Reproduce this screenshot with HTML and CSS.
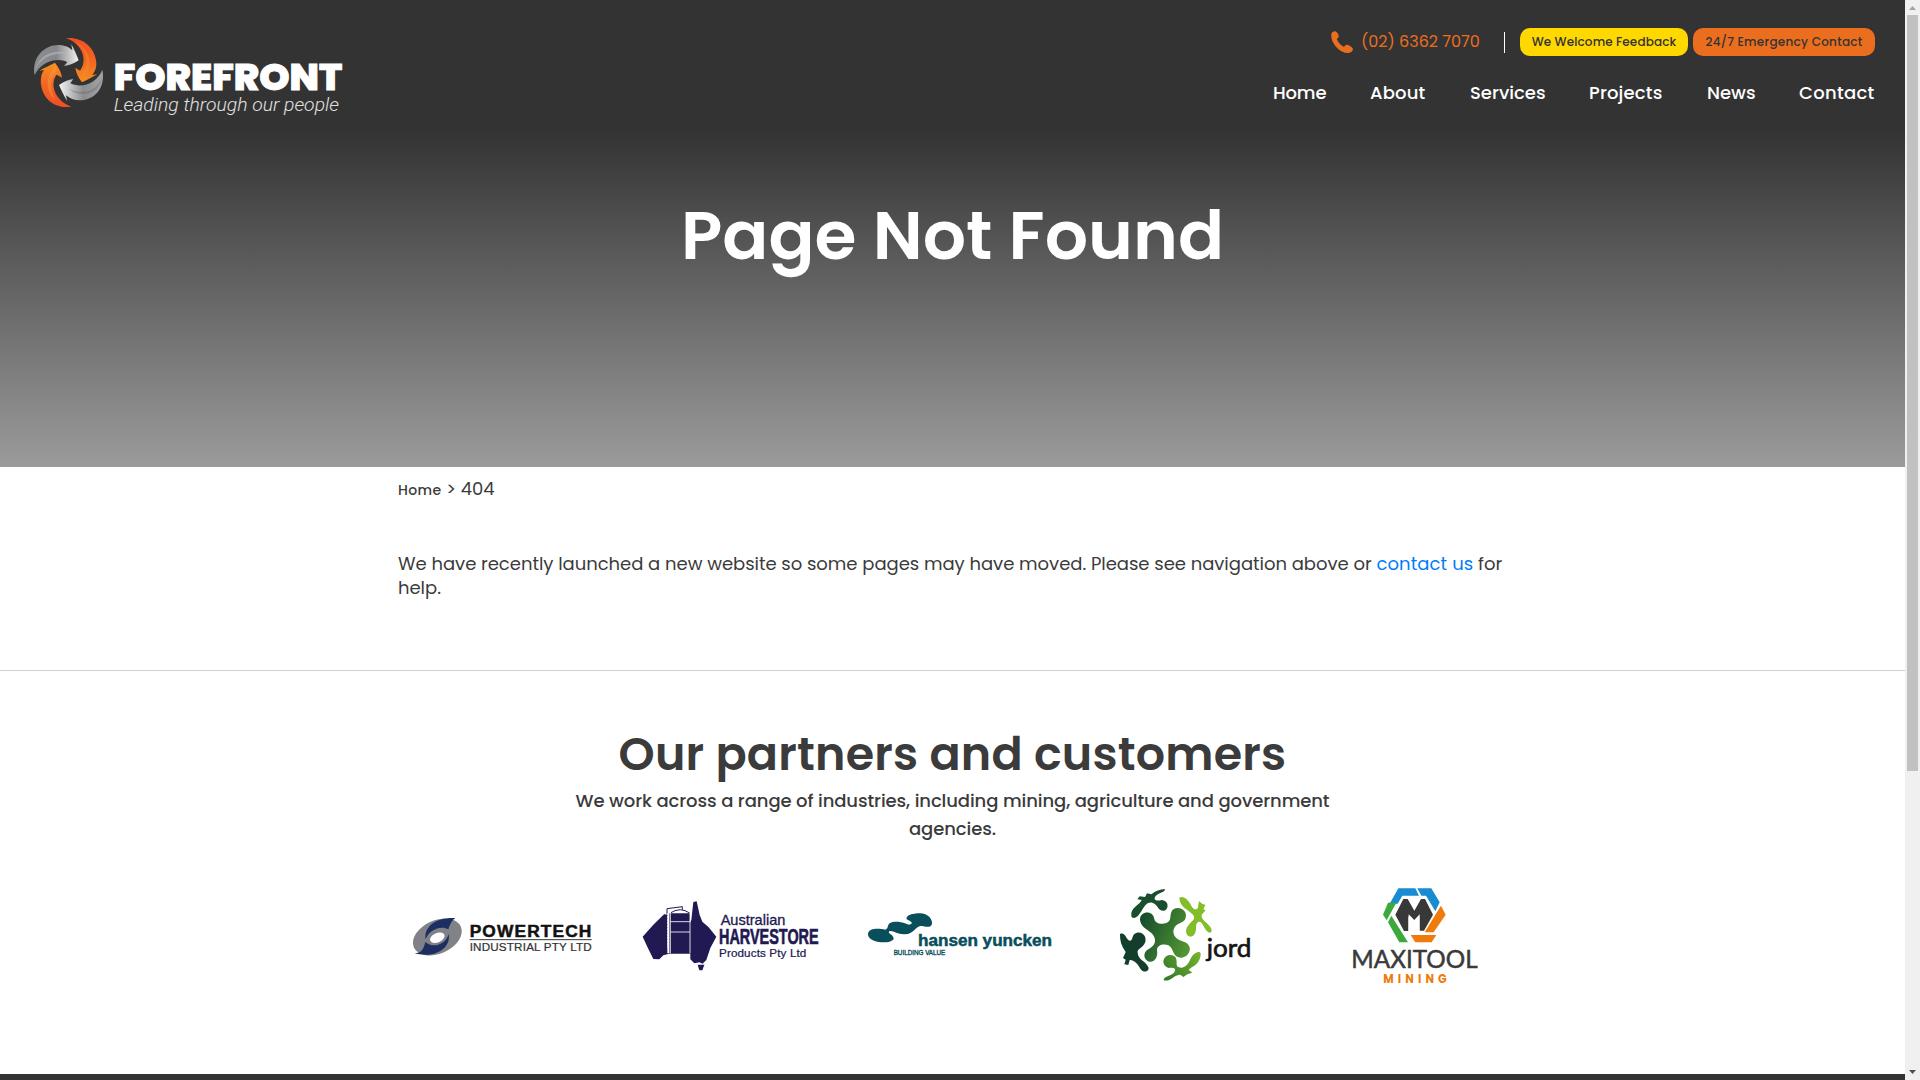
FILE: index.html
```html
<!DOCTYPE html>
<html lang="en">
<head>
<meta charset="utf-8">
<title>Page Not Found - Forefront</title>
<link rel="stylesheet" href="styles.css">
</head>
<body>
<div class="window">
<div class="page">
  <header class="hero">
    <div class="topbar">
      <a class="brand" aria-label="Forefront">
        <svg width="340" height="110" viewBox="0 0 1020 330">
          <defs>
            <linearGradient id="silver" x1="0" x2="1" y1="0" y2="0"><stop offset="0" stop-color="#8b8d90"/><stop offset=".5" stop-color="#85878a"/><stop offset="1" stop-color="#f1f1f1"/></linearGradient>
            <linearGradient id="silver2" x1="0" x2="1" y1="0" y2="0"><stop offset="0" stop-color="#f4f4f4"/><stop offset=".55" stop-color="#8b8d90"/><stop offset="1" stop-color="#a0a2a5"/></linearGradient>
            <linearGradient id="flame" x1="0" x2="0" y1="0" y2="1"><stop offset="0" stop-color="#f04e23"/><stop offset=".5" stop-color="#f36523"/><stop offset="1" stop-color="#f7901e"/></linearGradient>
            <linearGradient id="flame2" x1="0" x2="0" y1="0" y2="1"><stop offset="0" stop-color="#f7901e"/><stop offset=".5" stop-color="#f36523"/><stop offset="1" stop-color="#f04e23"/></linearGradient>
          </defs>
          <path fill="url(#silver)" d="M44 165C34 112 74 74 116 75c18 0 32 7 41 16l-3-19c9 18 16 32 22 49-12 9-28 16-44 17l10-12c-25-14-77-6-98 39z"/>
          <path fill="#bfc1c3" opacity=".5" d="M45 150C58 102 105 84 148 102c-38-6-84 6-103 48z"/>
          <path fill="url(#flame)" d="M138 54c48-4 83 25 90 66 4 22-4 37-12 45l16-2c-17 9-30 17-46 24-10-13-18-28-20-44l14 9c20-23 16-77-42-98z"/>
          <path fill="#f58a2a" opacity=".5" d="M165 65c48 23 57 73 26 110l-5-13c22-29 19-66-21-97z"/>
          <path fill="url(#silver2)" d="M247 149c11 56-24 91-67 92-17 0-31-6-42-15l3 17c-11-19-17-33-24-48 14-10 28-16 43-18l-9 13c34 16 79 1 96-41z"/>
          <path fill="#6f7174" opacity=".5" d="M247 168c-11 43-53 59-100 39 34 27 91 21 100-39z"/>
          <path fill="url(#flame2)" d="M154 260c-51 7-85-24-91-66-2-19 2-35 9-44l-14 2c15-9 31-16 47-24 12 15 19 29 21 45l-16-9c-20 24-10 75 44 96z"/>
          <path fill="#f8a14a" opacity=".4" d="M107 136c-29 31-34 75 0 107-19-37-17-69 4-91z"/>
          <text class="logo-name" x="281" y="211" textLength="686" lengthAdjust="spacingAndGlyphs">FOREFRONT</text>
          <text class="logo-tag" x="281" y="273" textLength="676" lengthAdjust="spacingAndGlyphs">Leading through our people</text>
        </svg>
      </a>
      <div class="header-right">
        <div class="contact-row">
          <a class="phone">
            <svg width="22" height="22" viewBox="0 0 22 22"><path fill="#eb6e1f" d="M.6 2Q2.500-.4 5 .4Q7.800 2.500 7.700 5.500Q7.400 7.300 5.800 7.900Q7.400 12.800 13 15.900Q14.500 13.200 17.300 14Q20.800 15.500 22 18Q21.600 21.500 17.400 22Q10 22 4.300 14.900Q-1 7.500 .6 2z"/></svg>
            <span>(02) 6362 7070</span>
          </a>
          <a class="pill feedback"><span>We Welcome Feedback</span></a>
          <a class="pill emergency"><span>24/7 Emergency Contact</span></a>
        </div>
        <nav class="menu">
          <a class="m-home">Home</a><a class="m-about">About</a><a class="m-services">Services</a><a class="m-projects">Projects</a><a class="m-news">News</a><a class="m-contact">Contact</a>
        </nav>
      </div>
    </div>
    <h1>Page Not Found</h1>
  </header>

  <main class="content">
    <div class="crumbs"><a>Home</a> <span class="sep">&gt;</span> <span>404</span></div>
    <p class="notice">We have recently launched a new website so some pages may have moved. Please see navigation above or <a>contact us</a> for<br>help.</p>
  </main>

  <section class="partners">
    <h2>Our partners and customers</h2>
    <p class="lead">We work across a range of industries, including mining, agriculture and government<br>agencies.</p>
    <div class="logos">
      <svg viewBox="0 -30 678 390">
        <ellipse cx="112" cy="171" rx="77" ry="50" transform="rotate(-24 112 171)" fill="#808287"/>
        <path fill="#1d2f62" d="M77 178c-7-41 36-67 89-64-14 10-17 24-21 34-22-14-60 3-68 30z"/>
        <path fill="#1d2f62" d="M43 220c20 0 28-12 33-34 25 21 61 7 70-24 8 44-42 74-103 58z"/>
        <ellipse cx="112" cy="173" rx="23" ry="14" transform="rotate(-24 112 173)" fill="#fff"/>
        <text class="arial bold" x="209" y="171" font-size="52" fill="#111" stroke="#111" stroke-width="1.500" textLength="365">POWERTECH</text>
        <path d="M209 179h366" stroke="#333" stroke-width="3"/>
        <text class="arial" x="209" y="213" font-size="35" fill="#333" stroke="#333" stroke-width=".7" textLength="366">INDUSTRIAL PTY LTD</text>
      </svg>
      <svg viewBox="-12 -30 678 390">
        <path fill="#211951" d="M38 170L70 134L103 102L112 106V220H118V100H180V128L184 120L190 66L200 64L209 105L217 125L236 142L259 170L241 204L229 240L218 251L208 247L193 250L181 238V221H118L100 226L88 238L70 237L54 205z"/>
        <path fill="#211951" d="M203 254h20l-6 17h-9z"/>
        <path fill="none" stroke="#211951" stroke-width="3" d="M111 106V86l46-6v9M123 98l12-6q16-6 30 0l14 7"/>
        <path fill="none" stroke="#fff" stroke-width="2.500" d="M121 220V98M180 98v122M121 125h59M121 156h59"/>
        <path fill="none" stroke="#fff" stroke-width="5" stroke-dasharray="4 5" d="M114 100v102"/>
        <text class="arial" x="272" y="135" font-size="45" fill="#211951" stroke="#211951" textLength="194" lengthAdjust="spacingAndGlyphs">Australian</text>
        <text class="arial bold" x="267" y="192" font-size="66" fill="#211951" stroke="#211951" stroke-width="2" textLength="299" lengthAdjust="spacingAndGlyphs">HARVESTORE</text>
        <text class="arial" x="267" y="231" font-size="35" fill="#211951" stroke="#211951" stroke-width=".7" textLength="262">Products Pty Ltd</text>
      </svg>
      <svg viewBox="-24 -60 678 390">
        <path fill="#084e5b" d="M24 132C26 112 60 116 76 119C88 116 78 100 98 96C122 92 138 102 148 104C164 100 152 94 140 88C136 76 158 70 180 70C204 70 218 88 216 102C212 116 194 108 182 108C166 110 162 132 134 133C112 134 98 120 88 124C80 130 102 134 101 147C94 158 70 158 56 156C36 152 24 144 24 132z"/>
        <text class="arial bold" x="174" y="167" font-size="48" fill="#084e5b" stroke="#084e5b" stroke-width="1.500" textLength="402" lengthAdjust="spacingAndGlyphs">hansen yuncken</text>
        <text class="arial" x="101" y="194" font-size="19" fill="#084e5b" stroke="#084e5b" stroke-width="1" textLength="155" lengthAdjust="spacingAndGlyphs">BUILDING VALUE</text>
      </svg>
      <svg viewBox="-81 0 678 390">
        <defs><linearGradient id="leaf" gradientUnits="userSpaceOnUse" x1="105" y1="160" x2="255" y2="220"><stop offset="0" stop-color="#164d2b"/><stop offset="1" stop-color="#529733"/></linearGradient>
        <linearGradient id="lime" gradientUnits="userSpaceOnUse" x1="170" y1="330" x2="290" y2="250"><stop offset="0" stop-color="#2c742b"/><stop offset="1" stop-color="#78b52b"/></linearGradient></defs>
        <path fill="url(#leaf)" d="M105 148C106 122 142 121 147 143C149 160 168 165 186 158C202 150 192 134 202 121C216 107 242 116 243 136C243 157 226 158 216 164C202 174 202 192 214 204C226 216 248 212 254 232C258 252 238 268 220 262C202 256 206 234 190 226C174 220 156 226 156 240C160 262 148 278 132 275C116 270 114 250 126 240C142 232 154 222 149 204C142 180 106 178 105 148z"/>
        <path fill="#194f2e" d="M79 138C76 112 104 106 110 90L97 88L104 79L120 81L126 70L139 73C152 62 164 58 180 57C180 68 160 68 152 78C142 92 158 94 170 90C190 90 194 116 178 122C160 126 158 102 142 98C114 92 112 138 88 144C82 144 79 142 79 138z"/>
        <path fill="#123e2b" d="M45 192C60 184 64 210 74 212C86 212 78 192 96 188C118 184 128 208 118 222C110 236 96 236 98 248C100 272 124 272 131 294C130 308 114 308 106 296C98 280 84 268 74 270L70 285L58 283L62 269L54 264L62 246C50 230 44 212 45 192z"/>
        <path fill="#83bd28" d="M223 83C236 76 252 92 258 106C264 120 276 122 279 112L282 93L292 102L301 104L295 118L302 121L290 134C288 152 306 154 318 174C324 188 314 192 306 184C294 170 292 152 280 156C266 162 282 186 262 199C246 204 238 184 247 170C256 154 276 148 264 134C250 118 224 112 223 83z"/>
        <path fill="url(#lime)" d="M175 274C180 250 206 252 213 264C218 278 210 288 222 292C238 298 252 280 256 268C264 250 282 240 287 250C288 268 276 286 260 292L251 299L262 308L247 313L235 321L226 314C206 314 198 336 176 331C176 318 198 318 207 308C218 294 202 292 190 294C180 290 175 284 175 274z"/>
        <text class="lato" x="305" y="261" font-size="75" fill="#151515" stroke="#151515" stroke-width="2" textLength="134" lengthAdjust="spacingAndGlyphs">jord</text>
      </svg>
      <svg viewBox="-108 0 678 390">
        <path fill="#188cd3" d="M175 55h51l11 22h-50l-14 24h-24z"/>
        <path fill="#188cd3" d="M232 55h42l25 42-13 27-28-47h-14z"/>
        <path fill="#ee7b0b" d="M303 107l14 27-36 53h-27l32-53z"/>
        <path fill="#ee7b0b" d="M252 195h37l-14 22h-49l-14-22h40z"/>
        <path fill="#3ca93b" d="M144 98h25l-19 35-10 18-11-17z"/>
        <path fill="#3ca93b" d="M154 137l50 80h-26l-34-60z"/>
        <path fill="#383838" d="M190 87h13l20 35 20-35h12l24 47-27 48h-14v-43l-9 12h-14l-10-12v44h-13l-26-49z"/>
        <path fill="#fff" d="M206 133l17 17 16-17v52h-33z"/>
        <text class="lato" x="34" y="293" font-size="74" fill="#3a3a3a" stroke="#3a3a3a" stroke-width="1.500" textLength="379" lengthAdjust="spacingAndGlyphs">MAXITOOL</text>
        <text class="mining" x="130" y="340" fill="#ee7b0b" textLength="190">MINING</text>
      </svg>
    </div>
  </section>
  <footer class="footer"></footer>
</div>
<div class="scrollbar">
  <svg width="15" height="15" viewBox="0 0 15 15"><path fill="#a3a3a3" d="M4 10h7L7.500 6z"/></svg>
  <div class="thumb"></div>
  <svg width="15" height="15" viewBox="0 0 15 15"><path fill="#505050" d="M4 5h7L7.500 9z"/></svg>
</div>
</div>
</body>
</html>
```
FILE: styles.css
```css
* { box-sizing: border-box; }
body {
  margin: 0;
  font-family: Poppins, Inter, "Open Sans", sans-serif;
  color: #3b3b3b;
  background: #fff;
}
h1, h2, p { margin: 0; }
.window { display: flex; height: 1080px; overflow: hidden; }
.page { flex: 1; display: flex; flex-direction: column; }
.scrollbar {
  width: 15px;
  display: flex;
  flex-direction: column;
  justify-content: space-between;
  background: #f0f0f0;
}
.scrollbar svg { display: block; }
.thumb { width: 11px; height: 756px; margin: 0 0 auto 2px; background: #c1c1c1; }

.hero {
  height: 467px;
  background: linear-gradient(#333 0%, #333 28%, #9b9b9b 100%);
  color: #fff;
}
.topbar { display: flex; justify-content: space-between; padding: 20px 30px 0 20px; height: 180px; }
.brand svg { display: block; }
.logo-name { font: 800 110px Poppins, Inter, sans-serif; fill: #fff; stroke: #fff; stroke-width: 3px; }
.logo-tag { font: italic 300 57px Roboto, sans-serif; fill: #e2e2e2; }
.header-right { display: flex; flex-direction: column; align-items: flex-end; padding-top: 8px; }
.contact-row { display: flex; align-items: center; height: 28px; }
.phone {
  display: flex;
  align-items: center;
  gap: 8px;
  width: 174px;
  height: 21px;
  margin-right: 15px;
  border-right: 1px solid #fff;
  color: #eb6e1f;
  font-size: 16px;
  line-height: 22px;
  white-space: nowrap;
}
.phone svg { flex: none; margin-top: -1px; }
.phone span { padding-bottom: 1px; }
.pill {
  height: 28px;
  border-radius: 10px;
  font-size: 12px;
  font-weight: 500;
  line-height: 28px;
  text-align: center;
  white-space: nowrap;
  color: #333;
}
.feedback { width: 168px; margin-right: 5px; background: #ffd800; letter-spacing: 0.13px; }
.emergency { width: 182px; background: #eb6e1f; letter-spacing: 0.27px; }
.menu { display: flex; gap: 44px; margin-top: 22px; font-size: 18px; font-weight: 500; line-height: 30px; letter-spacing: 0.17px; }
.menu a { white-space: nowrap; }
.m-home { width: 53px; letter-spacing: -0.15px; }
.m-about { width: 56px; }
.m-services { width: 75px; letter-spacing: 0; }
.m-projects { width: 74px; }
.m-news { width: 48px; letter-spacing: 0; }
.m-contact { width: 76px; letter-spacing: 0.28px; }
h1 { font-size: 68px; font-weight: 600; line-height: 112px; text-align: center; }

.content { height: 203px; padding: 8px 398px 0; font-size: 18px; line-height: 24px; }
.crumbs { line-height: 28px; }
.crumbs a { font-size: 14px; font-weight: 500; letter-spacing: 0.35px; }
.notice { margin-top: 48px; white-space: nowrap; letter-spacing: -0.03px; }
.notice a { color: #007bff; letter-spacing: 0.1px; }

.partners { height: 404px; border-top: 1px solid #d0d0d0; text-align: center; }
h2 { margin-top: 54px; font-size: 46px; font-weight: 600; line-height: 58px; letter-spacing: 0.2px; }
.lead { margin-top: 4px; font-size: 18px; font-weight: 500; line-height: 28px; letter-spacing: -0.09px; }
.logos { display: flex; margin: 27px 0 0 400px; }
.logos svg { width: 226px; height: 130px; flex: none; }
.arial { font-family: "Liberation Sans", Arial, sans-serif; }
.bold { font-weight: 700; }
.lato { font-family: Lato, sans-serif; }
.mining { font: 700 34px Poppins, Lato, sans-serif; }
.footer { flex: 1; background: #333; }
```
